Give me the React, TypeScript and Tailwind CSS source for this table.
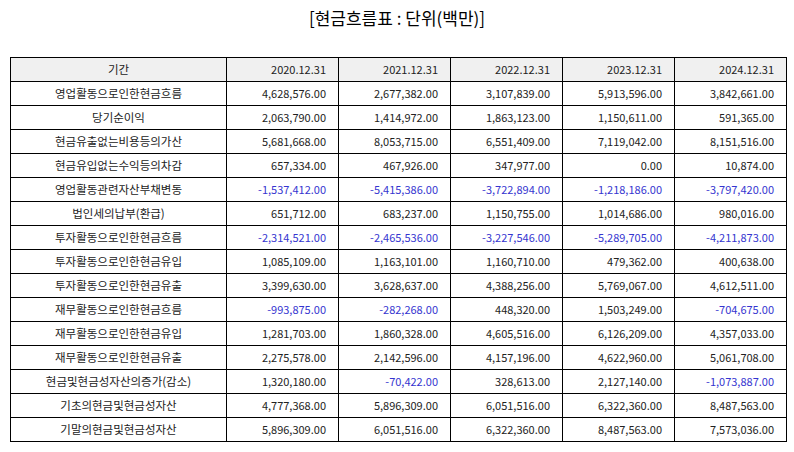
const years = ["2020.12.31", "2021.12.31", "2022.12.31", "2023.12.31", "2024.12.31"];

// [항목, 값...] — 음수는 파란색
const rows: [string, string[]][] = [
  ["영업활동으로인한현금흐름", ["4,628,576.00", "2,677,382.00", "3,107,839.00", "5,913,596.00", "3,842,661.00"]],
  ["당기순이익", ["2,063,790.00", "1,414,972.00", "1,863,123.00", "1,150,611.00", "591,365.00"]],
  ["현금유출없는비용등의가산", ["5,681,668.00", "8,053,715.00", "6,551,409.00", "7,119,042.00", "8,151,516.00"]],
  ["현금유입없는수익등의차감", ["657,334.00", "467,926.00", "347,977.00", "0.00", "10,874.00"]],
  ["영업활동관련자산부채변동", ["-1,537,412.00", "-5,415,386.00", "-3,722,894.00", "-1,218,186.00", "-3,797,420.00"]],
  ["법인세의납부(환급)", ["651,712.00", "683,237.00", "1,150,755.00", "1,014,686.00", "980,016.00"]],
  ["투자활동으로인한현금흐름", ["-2,314,521.00", "-2,465,536.00", "-3,227,546.00", "-5,289,705.00", "-4,211,873.00"]],
  ["투자활동으로인한현금유입", ["1,085,109.00", "1,163,101.00", "1,160,710.00", "479,362.00", "400,638.00"]],
  ["투자활동으로인한현금유출", ["3,399,630.00", "3,628,637.00", "4,388,256.00", "5,769,067.00", "4,612,511.00"]],
  ["재무활동으로인한현금흐름", ["-993,875.00", "-282,268.00", "448,320.00", "1,503,249.00", "-704,675.00"]],
  ["재무활동으로인한현금유입", ["1,281,703.00", "1,860,328.00", "4,605,516.00", "6,126,209.00", "4,357,033.00"]],
  ["재무활동으로인한현금유출", ["2,275,578.00", "2,142,596.00", "4,157,196.00", "4,622,960.00", "5,061,708.00"]],
  ["현금및현금성자산의증가(감소)", ["1,320,180.00", "-70,422.00", "328,613.00", "2,127,140.00", "-1,073,887.00"]],
  ["기초의현금및현금성자산", ["4,777,368.00", "5,896,309.00", "6,051,516.00", "6,322,360.00", "8,487,563.00"]],
  ["기말의현금및현금성자산", ["5,896,309.00", "6,051,516.00", "6,322,360.00", "8,487,563.00", "7,573,036.00"]],
];

export default function App() {
  return (
    <div className="w-[794px] h-[452px] bg-white text-[#222] font-['Noto_Sans_CJK_KR','Noto_Sans',sans-serif]">
      <h2 className="h-[36px] pt-[4px] text-center text-[17px] leading-[28px] text-black">
        [현금흐름표 : 단위(백만)]
      </h2>
      <div className="pt-[21px] pl-[10px]">
        <table className="border-collapse text-[11px] table-fixed w-[776px]">
          <colgroup>
            <col className="w-[216px]" />
            <col className="w-[112px]" />
            <col className="w-[112px]" />
            <col className="w-[112px]" />
            <col className="w-[112px]" />
            <col className="w-[112px]" />
          </colgroup>
          <thead>
            <tr className="h-[24px] bg-[#f0f0f0]">
              <th className="border border-black font-normal text-center text-[11.5px] p-0">기간</th>
              {years.map((y) => (
                <th key={y} className="border border-black font-normal text-right pr-[12px] p-0">
                  {y}
                </th>
              ))}
            </tr>
          </thead>
          <tbody>
            {rows.map(([label, vals]) => (
              <tr key={label} className="h-[24px]">
                <td className="border border-black text-center text-[11.5px] p-0">{label}</td>
                {vals.map((v, i) => (
                  <td
                    key={i}
                    className={
                      v.startsWith("-")
                        ? "border border-black text-right pr-[12px] p-0 text-[#3535d0]"
                        : "border border-black text-right pr-[12px] p-0"
                    }
                  >
                    {v}
                  </td>
                ))}
              </tr>
            ))}
          </tbody>
        </table>
      </div>
    </div>
  );
}
